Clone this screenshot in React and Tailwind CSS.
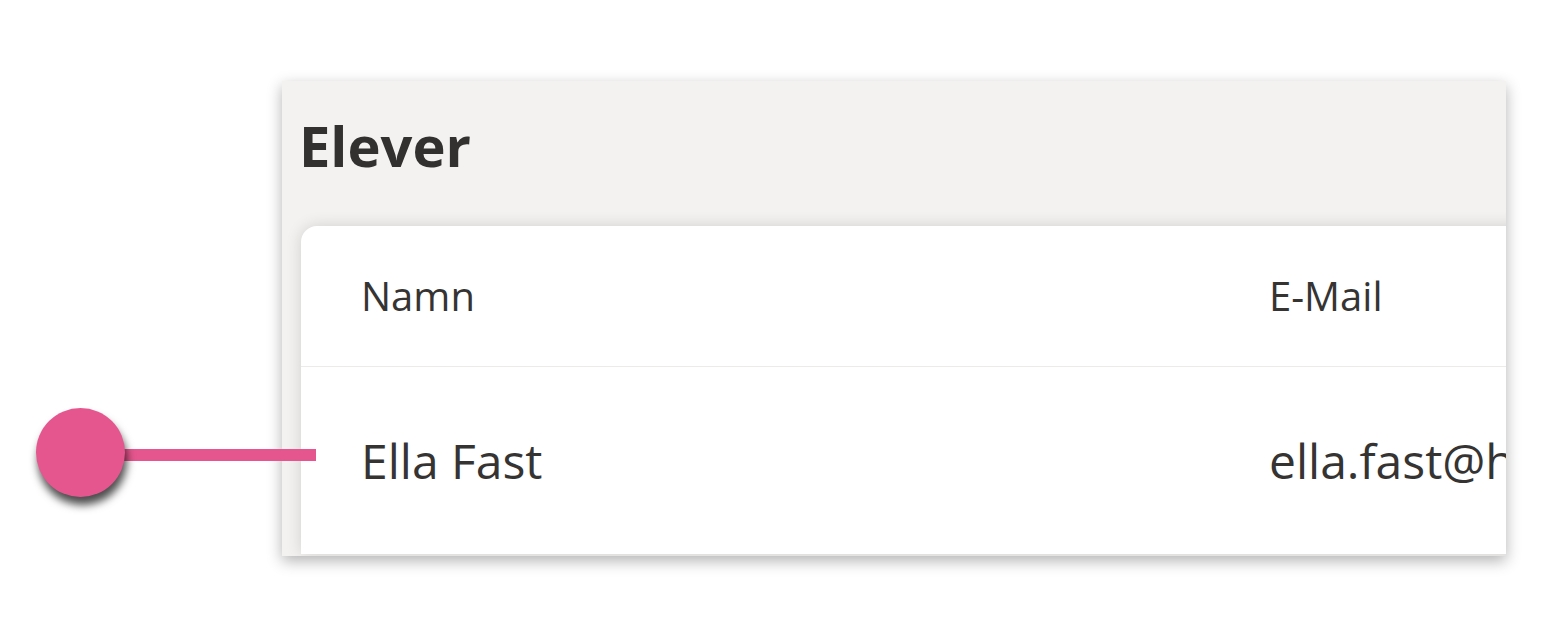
export default function App() {
  return (
    <div
      className="relative w-[1553px] h-[638px] bg-white overflow-hidden"
      style={{ fontFamily: '"Open Sans", "Noto Sans", sans-serif' }}
    >
      <div className="ml-[282px] pt-[81px]">
        <div className="w-[1224px] h-[475px] bg-[#f3f2f1] overflow-hidden flex flex-col shadow-[0_5px_14px_rgba(0,0,0,0.3)]">
          <div className="pl-[17px] pt-[26px] pb-[43px]">
            <h1 className="text-[56px] font-bold text-[#323130] leading-[1.362] m-0">Elever</h1>
          </div>
          <div className="ml-[19px] flex-1 mb-[2px] bg-white rounded-tl-[16px] shadow-[0_0_16px_rgba(0,0,0,0.14)] w-[1260px] text-[#353433]">
            <div className="grid grid-cols-[908px_1fr] pl-[60px] pt-[43px] pb-[42px] border-b border-[#edebe9] text-[40px] leading-[1.362]">
              <div>Namn</div>
              <div>E-Mail</div>
            </div>
            <div className="grid grid-cols-[908px_1fr] pl-[60px] pt-[61px] text-[48px] leading-[1.362] whitespace-nowrap">
              <div>Ella Fast</div>
              <div>ella.fast@hotmail.com</div>
            </div>
          </div>
        </div>
      </div>
      <div className="absolute left-[120px] top-[449px] w-[196px] h-[12px] bg-[#e6568e]" />
      <div className="absolute left-[36px] top-[408px] w-[89px] h-[89px] rounded-full bg-[#e6568e] shadow-[2px_8px_8px_rgba(0,0,0,0.7)]" />
    </div>
  );
}
